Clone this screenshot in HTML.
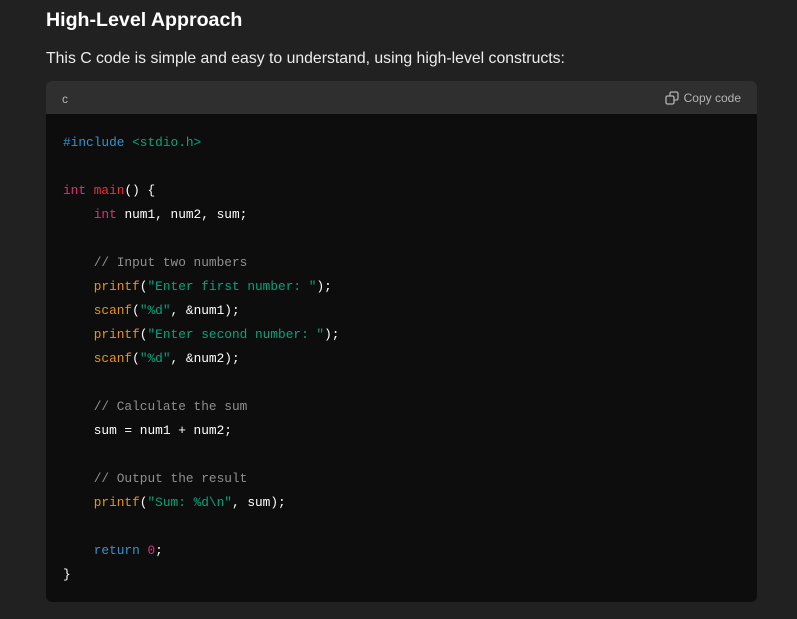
<!DOCTYPE html>
<html><head><style>
body{margin:0;background:#212121;width:797px;height:619px;overflow:hidden;font-family:"Liberation Sans",sans-serif;color:#ececec}
h3{position:absolute;left:46px;top:9px;margin:0;font-size:19.6px;font-weight:bold;color:#fff}
p{position:absolute;left:46px;top:50px;margin:0;font-size:15.8px;color:#ececec}
.box{position:absolute;left:46px;top:81px;width:711px;height:521px;border-radius:6px;background:#0d0d0d;overflow:hidden}
.hd{height:33px;background:#2f2f2f;position:relative;font-size:12px;color:#b4b4b4}
.hd .l{position:absolute;left:16px;top:11px}
.hd .r{position:absolute;right:16px;top:10px;display:flex;align-items:center;gap:5px}
pre{margin:0;position:absolute;left:17px;top:50px;font-family:"Liberation Mono",monospace;font-size:12.8px;line-height:24px;color:#fff}
.k{color:#2e95d3}.t{color:#df3079}.f{color:#f22c3d}.s{color:#00a67d}.b{color:#e9950c}.c{color:#8f8f8f}.m{color:#2e95d3}
</style></head><body>
<h3>High-Level Approach</h3>
<p>This C code is simple and easy to understand, using high-level constructs:</p>
<div class="box">
<div class="hd"><span class="l">c</span><span class="r"><svg width="14" height="14" viewBox="0 0 14 14" fill="none" stroke="#b4b4b4" stroke-width="1.3"><rect x="1" y="5" width="8" height="8" rx="1.5"/><path d="M5 5V2.5A1.5 1.5 0 0 1 6.5 1h5A1.5 1.5 0 0 1 13 2.5v5A1.5 1.5 0 0 1 11.5 9H9"/></svg>Copy code</span></div>
<pre><span class="m">#include</span> <span class="s">&lt;stdio.h&gt;</span>

<span class="t">int</span> <span class="f">main</span>() {
    <span class="t">int</span> num1, num2, sum;

    <span class="c">// Input two numbers</span>
    <span class="b">printf</span>(<span class="s">"Enter first number: "</span>);
    <span class="b">scanf</span>(<span class="s">"%d"</span>, &amp;num1);
    <span class="b">printf</span>(<span class="s">"Enter second number: "</span>);
    <span class="b">scanf</span>(<span class="s">"%d"</span>, &amp;num2);

    <span class="c">// Calculate the sum</span>
    sum = num1 + num2;

    <span class="c">// Output the result</span>
    <span class="b">printf</span>(<span class="s">"Sum: %d\n"</span>, sum);

    <span class="k">return</span> <span class="t">0</span>;
}</pre>
</div>
</body></html>
